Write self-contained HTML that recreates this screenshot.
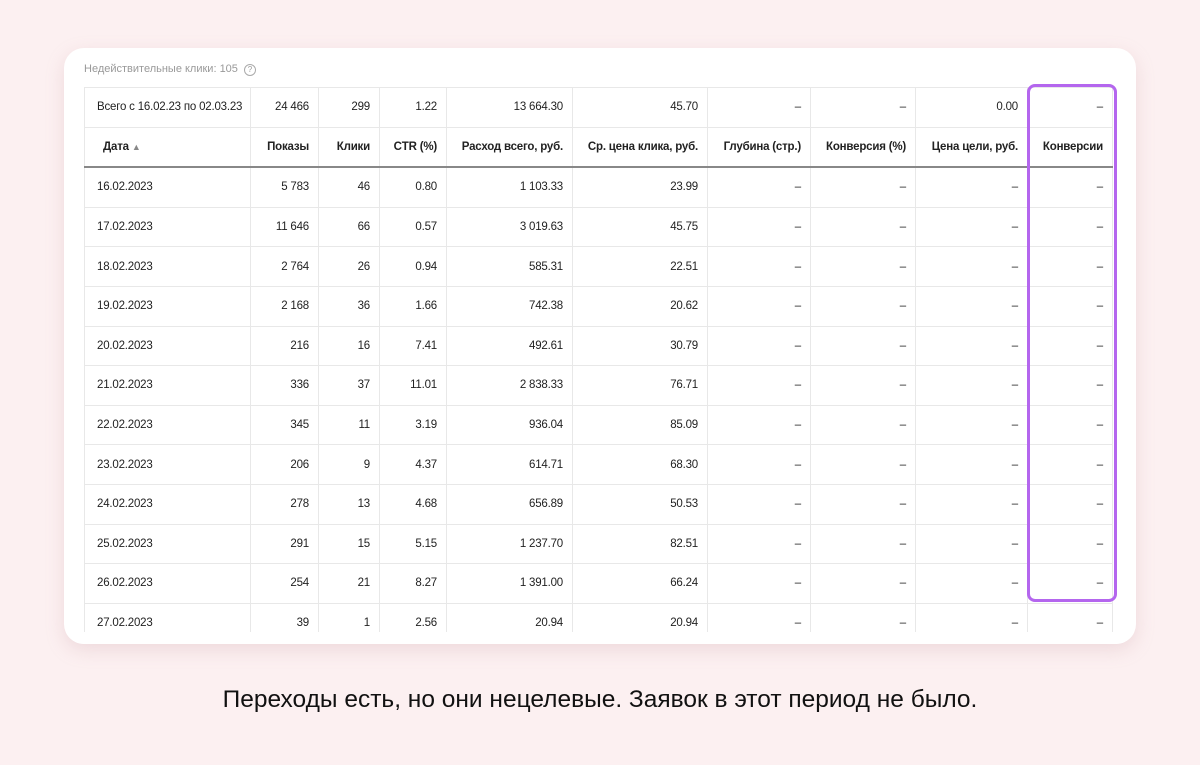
<!DOCTYPE html>
<html><head><meta charset="utf-8"><style>
body{margin:0;width:1200px;height:765px;background:#fcf0f1;font-family:"Liberation Sans",sans-serif;position:relative;overflow:hidden}
.card{position:absolute;left:64px;top:48px;width:1072px;height:596px;background:#fff;border-radius:20px;box-shadow:0 6px 18px rgba(200,150,160,.25);overflow:hidden}
.note{position:absolute;left:20px;top:15px;font-size:11px;color:#999}
.note span{display:inline-block;width:10px;height:10px;border:1px solid #aaa;border-radius:50%;font-size:8px;text-align:center;line-height:10px;margin-left:3px;vertical-align:0}
table{position:absolute;left:20px;top:39px;border-collapse:collapse;font-size:11.5px;color:#222;table-layout:fixed;width:1028px}
td{border:1px solid #e8e8e8;height:38.6px;padding:0 9px 0 4px;text-align:right;white-space:nowrap;overflow:hidden;letter-spacing:-0.2px}
td:first-child{text-align:left;padding-left:12px}
tr.h td{font-weight:bold;border-bottom:2px solid #888}
tr.h td:first-child{padding-left:18px}
.box{position:absolute;left:1027px;top:84px;width:84px;height:512px;border:3px solid #b466ee;border-radius:8px}
.cap{position:absolute;top:686px;width:100%;text-align:center;font-size:24.5px;color:#111}
.fade{position:absolute;left:0;bottom:0;width:100%;height:12px;background:#fff}
</style></head><body>
<div class="card">
<div class="note">Недействительные клики: 105 <span>?</span></div>
<table>
<colgroup><col style="width:166px"><col style="width:68px"><col style="width:61px"><col style="width:67px"><col style="width:126px"><col style="width:135px"><col style="width:103px"><col style="width:105px"><col style="width:112px"><col style="width:85px"></colgroup>
<tr><td>Всего с 16.02.23 по 02.03.23</td><td>24 466</td><td>299</td><td>1.22</td><td>13 664.30</td><td>45.70</td><td>–</td><td>–</td><td>0.00</td><td>–</td></tr>
<tr class="h"><td>Дата <span style="color:#888;font-size:9px">▲</span></td><td>Показы</td><td>Клики</td><td>CTR (%)</td><td>Расход всего, руб.</td><td>Ср. цена клика, руб.</td><td>Глубина (стр.)</td><td>Конверсия (%)</td><td>Цена цели, руб.</td><td>Конверсии</td></tr>
<tr><td>16.02.2023</td><td>5 783</td><td>46</td><td>0.80</td><td>1 103.33</td><td>23.99</td><td>–</td><td>–</td><td>–</td><td>–</td></tr>
<tr><td>17.02.2023</td><td>11 646</td><td>66</td><td>0.57</td><td>3 019.63</td><td>45.75</td><td>–</td><td>–</td><td>–</td><td>–</td></tr>
<tr><td>18.02.2023</td><td>2 764</td><td>26</td><td>0.94</td><td>585.31</td><td>22.51</td><td>–</td><td>–</td><td>–</td><td>–</td></tr>
<tr><td>19.02.2023</td><td>2 168</td><td>36</td><td>1.66</td><td>742.38</td><td>20.62</td><td>–</td><td>–</td><td>–</td><td>–</td></tr>
<tr><td>20.02.2023</td><td>216</td><td>16</td><td>7.41</td><td>492.61</td><td>30.79</td><td>–</td><td>–</td><td>–</td><td>–</td></tr>
<tr><td>21.02.2023</td><td>336</td><td>37</td><td>11.01</td><td>2 838.33</td><td>76.71</td><td>–</td><td>–</td><td>–</td><td>–</td></tr>
<tr><td>22.02.2023</td><td>345</td><td>11</td><td>3.19</td><td>936.04</td><td>85.09</td><td>–</td><td>–</td><td>–</td><td>–</td></tr>
<tr><td>23.02.2023</td><td>206</td><td>9</td><td>4.37</td><td>614.71</td><td>68.30</td><td>–</td><td>–</td><td>–</td><td>–</td></tr>
<tr><td>24.02.2023</td><td>278</td><td>13</td><td>4.68</td><td>656.89</td><td>50.53</td><td>–</td><td>–</td><td>–</td><td>–</td></tr>
<tr><td>25.02.2023</td><td>291</td><td>15</td><td>5.15</td><td>1 237.70</td><td>82.51</td><td>–</td><td>–</td><td>–</td><td>–</td></tr>
<tr><td>26.02.2023</td><td>254</td><td>21</td><td>8.27</td><td>1 391.00</td><td>66.24</td><td>–</td><td>–</td><td>–</td><td>–</td></tr>
<tr><td>27.02.2023</td><td>39</td><td>1</td><td>2.56</td><td>20.94</td><td>20.94</td><td>–</td><td>–</td><td>–</td><td>–</td></tr>
</table>
<div class="fade"></div>
</div>
<div class="box"></div>
<div class="cap">Переходы есть, но они нецелевые. Заявок в этот период не было.</div>
</body></html>
